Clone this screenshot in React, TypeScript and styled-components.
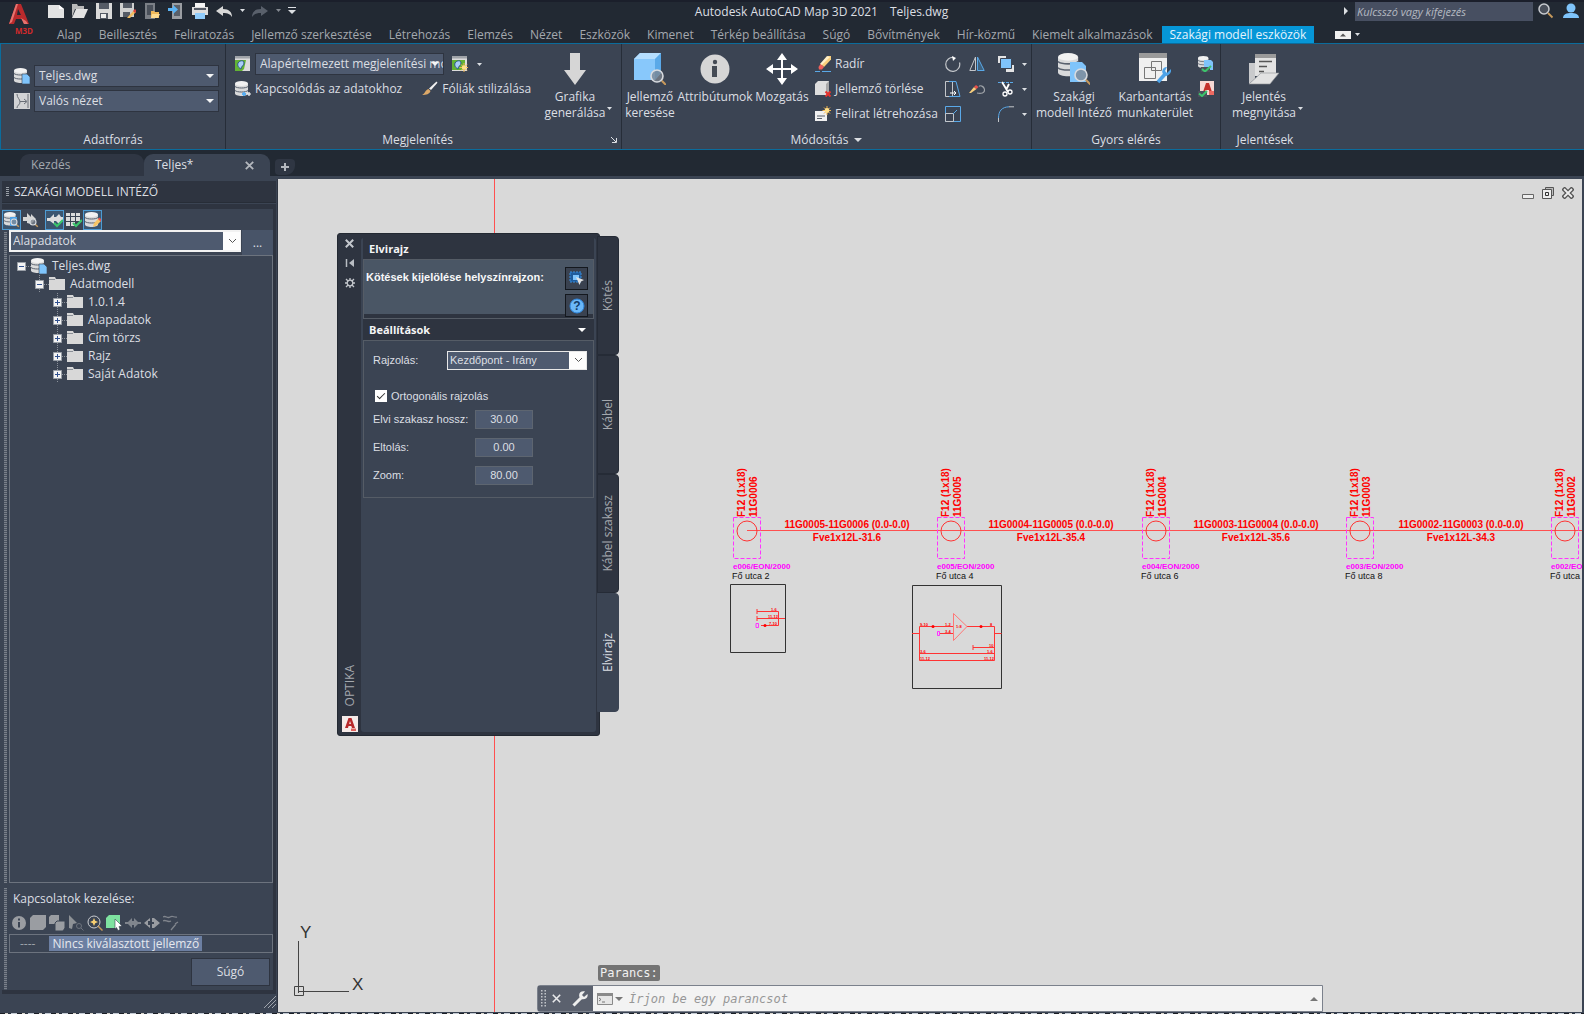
import React from "react";
import styled, { createGlobalStyle, css } from "styled-components";

const c = {
  frame: "#222933",
  ribbon: "#3b4453",
  dark: "#2e3440",
  field: "#4e5a6f",
  text: "#dcdfe3",
  dim: "#a4a8ae",
  accent: "#0696d7",
  edge: "#0b6c9c",
  canvas: "#d9d9d9",
  sky: "#7fc4fb",
};
const ui = `"Open Sans", "Noto Sans", sans-serif`;
const arial = `"Liberation Sans", Arial, sans-serif`;
const mono = `"DejaVu Sans Mono", monospace`;

const Global = createGlobalStyle`
  *, *::before, *::after { box-sizing: border-box; }
  html, body, #root { height: 100%; }
  body { margin: 0; overflow: hidden; background: ${c.frame}; color: ${c.text}; font: 12px/16px ${ui}; }
  button, input, select { font: inherit; color: inherit; margin: 0; padding: 0; border: 0; background: none; border-radius: 0; outline: 0; }
  svg { display: block; flex: none; }
  ul { list-style: none; margin: 0; padding: 0; }
  h2, h3 { margin: 0; font: inherit; }
`;

const Shell = styled.div`
  display: flex;
  flex-direction: column;
  height: 100vh;
`;

/* ---------- icons ---------- */
type IconProps = { size?: number; children: React.ReactNode; box?: number };
const Icon = ({ size = 16, box, children }: IconProps) => (
  <svg width={size} height={size} viewBox={`0 0 ${box ?? size} ${box ?? size}`} fill="none" aria-hidden="true">
    {children}
  </svg>
);
const Caret = ({ w = 5, color = "#dcdfe3" }: { w?: number; color?: string }) => (
  <svg width={w} height={Math.ceil(w / 2)} viewBox="0 0 10 5" preserveAspectRatio="none" aria-hidden="true">
    <path d="M0 0h10L5 5z" fill={color} />
  </svg>
);
const Cylinder = ({ s = 1 }: { s?: number }) => (
  <g transform={`scale(${s})`}>
    <path d="M0 2.5v10C0 14 3 15 6.500 15S13 14 13 12.500v-10z" fill="#d9dadb" />
    <ellipse cx="6.500" cy="2.500" rx="6.500" ry="2.500" fill="#f2f2f2" />
    <path d="M0 5.500c2 2 11 2 13 0M0 9.500c2 2 11 2 13 0" stroke="#5a626f" strokeWidth="1" />
  </g>
);
const DbIcon = () => (
  <Icon>
    <Cylinder />
    <path d="M8 6h5l3 3v7H8z" fill={c.sky} stroke="#3b4453" strokeWidth=".6" />
  </Icon>
);
const DbLinkIcon = () => (
  <Icon>
    <Cylinder />
    <path d="M9 11v4M7 13h4" stroke="#5aaef0" strokeWidth="2" />
    <path d="M12 13h4M14 11v4" stroke="#fff" strokeWidth="1.200" />
  </Icon>
);
const ViewIcon = () => (
  <Icon>
    <path d="M0 0h16v16H0z" fill="#d2d3d5" />
    <path d="M3 1c0 4 3 5 3 8s-3 3-3 6M14 1v14M6 8.500h6M10 6l3 2.500L10 11" stroke="#6a6f77" />
  </Icon>
);
const MapIcon = ({ star }: { star?: boolean }) => (
  <Icon>
    <path d="M0 0h15v15H0z" fill="#dcdcdc" />
    <path d="M0 0h15v2.500H0z" fill="#9fa3a8" />
    <path d={star ? "M0 4h13v10H0z" : "M0 4h11l-2 9-2 2H0z"} fill="#62b234" />
    <path d="M3 7c2-3 6-3 6 0s-3 3-3 6c-2-1-4-3-3-6z" fill="#a9cdf8" stroke="#2a5a8a" />
    {star && (
      <g>
        <path d="M12 7v9M7.500 11.500h9M9 8.500l6 6M15 8.500l-6 6" stroke="#f2b24c" />
        <circle cx="12" cy="11.500" r="2.200" fill="#ffe08a" />
      </g>
    )}
  </Icon>
);
const BrushIcon = () => (
  <Icon>
    <path d="M14.500 .5l1 1.200L9 9 7 7.500z" fill="#f1f1f1" />
    <path d="M6.500 8l2 2c-1 3-4 4-8.500 4 3-1 3-5 6.500-6z" fill="#dca868" />
  </Icon>
);
const DownArrow = () => (
  <Icon size={32}>
    <path d="M11 0h10v17h6L16 32 5 17h6z" fill="#d6d6d6" />
  </Icon>
);
const Lens = ({ x, y, r }: { x: number; y: number; r: number }) => (
  <g>
    <path d={`M${x + r * 0.8} ${y + r * 0.8}l${r * 0.8} ${r * 0.8}`} stroke="#c89a5c" strokeWidth={r > 4 ? 2 : 1.4} />
    <circle cx={x} cy={y} r={r} fill="#7d848e" fillOpacity=".75" stroke="#d8dbdf" strokeWidth={r > 4 ? 1.6 : 1.1} />
  </g>
);
const CubeFind = () => (
  <Icon size={32}>
    <path d="M0 6l6-6h21v20l-6 7H0z" fill="#88c8fb" />
    <path d="M0 6l6-6h21l-6 6z" fill="#b5defe" />
    <path d="M21 6l6-6v20l-6 7z" fill="#5aa9e8" />
    <Lens x={23} y={23} r={6} />
  </Icon>
);
const InfoBig = () => (
  <Icon size={32}>
    <circle cx="16" cy="16" r="14.500" fill="#d6d6d6" />
    <circle cx="16" cy="9" r="2.200" fill="#454b55" />
    <path d="M13 13h5v11h-5z" fill="#454b55" />
  </Icon>
);
const MoveIcon = () => (
  <Icon size={32}>
    <path d="M16 3v26M3 16h26" stroke="#fff" strokeWidth="2" />
    <path d="M16 0l5 7H11zM16 32l5-7H11zM0 16l7-5v10zM32 16l-7-5v10z" fill="#fff" />
  </Icon>
);
const EraserIcon = () => (
  <Icon>
    <path d="M13 0h3v3.500L9 11l-3.500-3z" fill="#f9cf7c" />
    <path d="M12 0L5 8l1.500 1.200L15 1z" fill="#fff0c8" />
    <path d="M5.500 8L9 11l-2 2.500H4L3.500 11z" fill="#f0605a" />
    <path d="M0 15.500h5M7 15.500h9" stroke="#5aa9e8" />
  </Icon>
);
const CubeDelete = () => (
  <Icon>
    <path d="M0 3l3-3h11v11l-3 3H0z" fill="#dedede" />
    <path d="M11 3l3-3v11l-3 3z" fill="#a9a9a9" />
    <path d="M10.500 10.500l5 5M15.500 10.500l-5 5" stroke="#e5322d" strokeWidth="2" />
  </Icon>
);
const LabelIcon = () => (
  <Icon>
    <path d="M0 5h12v10H0z" fill="#f0f0f0" />
    <path d="M2 10h8M2 12.500h5" stroke="#555c67" />
    <path d="M12 0v9M7.500 4.500h9M9 1.500l6 6M15 1.500l-6 6" stroke="#f2b24c" />
    <circle cx="12" cy="4.500" r="2.400" fill="#ffe08a" />
  </Icon>
);
const RotateIcon = () => (
  <Icon>
    <path d="M9 1.500a7 7 0 1 0 5.500 5" stroke="#c3c6ca" strokeWidth="1.200" />
    <path d="M7 0l4 2-3 3z" fill="#fff" />
  </Icon>
);
const MirrorIcon = () => (
  <Icon>
    <path d="M6.500 1v13.500H.8z" stroke="#c3c6ca" />
    <path d="M8.500 1v13.500h6.700z" stroke="#5aa9e8" fill="#3f627f" />
  </Icon>
);
const StretchIcon = () => (
  <Icon>
    <path d="M.5.500h7v15h-7z" stroke="#c3c6ca" />
    <path d="M4 .5h7l4 15H4" stroke="#5aa9e8" />
    <path d="M5 12h5M9 10l2 2-2 2" stroke="#fff" />
  </Icon>
);
const EditIcon = () => (
  <Icon>
    <path d="M0 12l5-6 2.500 2L2 12z" fill="#f9cf7c" />
    <path d="M5 6l2-2 2.500 2-2 2z" fill="#e8504a" />
    <path d="M8 12c4 1 8 0 7.500-3.500S11 4 10 5.500" stroke="#9fa3a8" strokeWidth="1.200" />
  </Icon>
);
const ScaleIcon = () => (
  <Icon>
    <path d="M.5.500h15v15H.5z" stroke="#5aa9e8" />
    <path d="M.5 7.500h8v8h-8z" stroke="#c3c6ca" />
    <path d="M8 8l4-4" stroke="#5aa9e8" />
  </Icon>
);
const OrderIcon = () => (
  <Icon>
    <path d="M0 0h8v7H0zM8 9h8v7H8z" fill="#e4e4e4" />
    <path d="M2.500 2.500h11v10h-11z" fill={c.sky} stroke="#3b4453" />
  </Icon>
);
const TrimIcon = () => (
  <Icon>
    <path d="M0 1.500h16" stroke="#5aa9e8" strokeDasharray="3 1" />
    <path d="M4 1l6 10M11 3L8 9" stroke="#fff" strokeWidth="1.800" />
    <circle cx="7" cy="13" r="2" stroke="#fff" strokeWidth="1.300" />
    <circle cx="12" cy="11" r="2" stroke="#fff" strokeWidth="1.300" />
  </Icon>
);
const FilletIcon = () => (
  <Icon>
    <path d="M.5 16v-4" stroke="#c3c6ca" />
    <path d="M.5 12C.5 5 4 1 11 .8" stroke="#5aa9e8" />
    <path d="M11 .8h5" stroke="#c3c6ca" />
  </Icon>
);
const ModelManager = () => (
  <Icon size={32}>
    <Cylinder s={1.55} />
    <path d="M12 9h12l4 4v16H12z" fill={c.sky} />
    <Lens x={23} y={22} r={6} />
  </Icon>
);
const Workspace = () => (
  <Icon size={32}>
    <path d="M0 0h28v28H0z" fill="#f0f0f0" />
    <path d="M0 0h28v5H0z" fill="#9a9a9a" />
    <path d="M5.500 14.500h11v11h-11zM12.500 8.500h10v9h-10z" fill="#f0f0f0" stroke="#777" />
    <path d="M19 29l8-9" stroke="#4ea3e8" strokeWidth="3.500" />
    <path d="M32 16l-4 4-2-2 2-4c-4 0-6 4-4 7l3 2c3 0 6-4 5-7z" fill="#4ea3e8" />
  </Icon>
);
const DbCheck = () => (
  <Icon>
    <Cylinder s={0.8} />
    <path d="M6 4h7l2 2v8H6z" fill={c.sky} />
    <path d="M3 11h9v5H3z" fill="#4a505a" />
    <path d="M4 13l3 2.500L13 10" stroke="#3cc46c" strokeWidth="2" />
  </Icon>
);
const CadCheck = () => (
  <Icon>
    <path d="M2 0h14v14H2z" fill="#f7d9d5" />
    <path d="M5 11L8 2h3l3 9h-2.500l-.6-2H7.600L7 11z" fill="#c4302b" />
    <path d="M11 10h5v4h-5z" fill="#ee6a62" />
    <path d="M0 10h9v6H0z" fill="#4a505a" />
    <path d="M1 12.500L4 15l5-5" stroke="#3cc46c" strokeWidth="2" />
  </Icon>
);
const ReportIcon = () => (
  <Icon size={32}>
    <path d="M1 10h6v16l-6 5z" fill="#c9cacc" />
    <path d="M7 1h21v22H7z" fill="#e2e2e2" />
    <path d="M7 1h21v4H7z" fill="#9a9a9a" />
    <path d="M11 8.500h13M11 13.500h8M11 18.500h5" stroke="#555" strokeWidth="1.500" />
    <path d="M1 31l12-11h18l-9 11z" fill="#e2e2e2" stroke="#8d9095" strokeWidth=".6" />
  </Icon>
);
const FolderIcon = () => (
  <Icon>
    <path d="M0 1h6l1 2h9v11H0z" fill="#d8d8d8" />
    <path d="M0 3.500h6" stroke="#8a8f97" />
  </Icon>
);

/* ---------- title bar ---------- */
const Header = styled.header`
  display: flex;
  height: 43px;
  background: ${c.frame};
  border-top: 2px solid #1b1f2b;
`;
const Logo = styled.div`
  width: 44px;
  padding: 1px 0 0 8px;
`;
const HeaderMain = styled.div`
  flex: 1;
  display: flex;
  flex-direction: column;
  min-width: 0;
`;
const TitleRow = styled.div`
  display: flex;
  height: 24px;
`;
const Tools = styled.div`
  display: flex;
  flex: 1;
`;
const ToolButton = styled.button<{ $w?: number }>`
  width: ${(p) => p.$w ?? 24}px;
  height: 17px;
  display: flex;
  align-items: center;
  justify-content: center;
`;
const AppTitle = styled.div`
  display: flex;
  gap: 12px;
  padding: 2px 0 0 16px;
  white-space: nowrap;
`;
const HeaderRight = styled.div`
  flex: 1;
  display: flex;
  justify-content: flex-end;
  align-items: flex-start;
  gap: 5px;
  padding-right: 1px;
`;
const Search = styled.input`
  width: 178px;
  height: 19px;
  padding: 0 2px;
  background: #474f61;
  font-style: italic;
  font-size: 11px;
  &::placeholder { color: #b6bac1; opacity: 1; }
`;
const Tabs = styled.nav`
  display: flex;
  height: 17px;
  gap: 1px;
  padding-left: 5px;
`;
const Tab = styled.button<{ $on?: boolean }>`
  padding: 0 8px;
  line-height: 17px;
  white-space: nowrap;
  color: ${(p) => (p.$on ? "#e4f3fc" : c.dim)};
  background: ${(p) => (p.$on ? c.accent : "none")};
`;
const RibbonToggle = styled.button`
  display: flex;
  align-items: center;
  gap: 4px;
  margin-left: 20px;
`;
const tabNames = [
  "Alap", "Beillesztés", "Feliratozás", "Jellemző szerkesztése", "Létrehozás", "Elemzés", "Nézet", "Eszközök",
  "Kimenet", "Térkép beállítása", "Súgó", "Bővítmények", "Hír-közmű", "Kiemelt alkalmazások", "Szakági modell eszközök",
];

const quick: [string, React.ReactNode][] = [
  ["Új", <Icon><path d="M0 2h11l5 4v9H0z" fill="#e3e3e3" /><path d="M11 2l5 4h-5z" fill="#fff" /></Icon>],
  ["Megnyitás", <Icon><path d="M0 1h5l1 2h6v3H3L0 14z" fill="#b9b9b9" /><path d="M4 6h12l-4 9H0z" fill="#e3e3e3" /></Icon>],
  ["Mentés", <Icon><path d="M0 0h16v16H0z" fill="#dadada" /><path d="M3 0h10v6H3zM4 10h8v6H4z" fill="#555b66" /><path d="M5 11h5v4H5z" fill="#eee" /></Icon>],
  ["Mentés másként", <Icon><path d="M0 0h14v14H0z" fill="#cfcfcf" /><path d="M3 0h9v5H3zM3 9h7v5H3z" fill="#555b66" /><path d="M7 15l7-8 2 2-6 6z" fill="#f3bd62" /><path d="M13 8l2-2 1.500 2L15 10z" fill="#d9443f" /></Icon>],
  ["Megnyitás mobilról", <Icon><path d="M1 0h10v16H1z" fill="#7b7f86" /><path d="M3 2h6v10H3z" fill="#4a505a" /><path d="M7 8h3l1 1h4v6H7z" fill="#f1b95a" /><path d="M8 11h8l-2 4H7z" fill="#ffdc92" /></Icon>],
  ["Mentés mobilra", <Icon><path d="M4 0h10v16H4z" fill="#9a9da2" /><path d="M6 2h6v11H6z" fill="#5a606a" /><path d="M0 5h5V2l5 4.500L5 11V8H0z" fill="#5bb4f5" /></Icon>],
  ["Nyomtatás", <Icon><path d="M3 0h10v4H3z" fill="#f5f5f5" /><path d="M0 4h16v8H0z" fill="#dcdcdc" /><path d="M2 5h12v2H2z" fill="#555b66" /><path d="M3 10h10v6H3z" fill="#8fcbfb" /></Icon>],
  ["Visszavonás", <Icon><path d="M0 8l7-5v3c6 0 9 3 9 8-2-3-4-4-9-4v3z" fill="#d8d8d8" /></Icon>],
];

const HeaderBar = () => (
  <Header>
    <Logo>
      <svg width="28" height="34" viewBox="0 0 28 34" aria-hidden="true">
        <path d="M8 1h5l8 20h-5l-2-5H8l-2 5H1zM10 6L9 12h4z" fill="#b92a2c" />
        <path d="M8 1h2L4 19l-3 2zM13 15l3 6h4l-2-3z" fill="#e6736f" />
        <text x="7" y="31" fontSize="8" fontWeight="700" fontFamily="Open Sans" fill="#cf2a2c">M3D</text>
      </svg>
    </Logo>
    <HeaderMain>
      <TitleRow>
        <Tools>
          {quick.map(([n, i]) => <ToolButton key={n} aria-label={n}>{i}</ToolButton>)}
          <ToolButton $w={12} aria-label="Visszavonások"><Caret /></ToolButton>
          <ToolButton aria-label="Újra"><Icon><path d="M16 8L9 3v3c-6 0-9 3-9 8 2-3 4-4 9-4v3z" fill="#59606b" /></Icon></ToolButton>
          <ToolButton $w={12} aria-label="Ismétlések"><Caret color="#858a92" /></ToolButton>
          <ToolButton $w={16} aria-label="Testreszabás"><Icon size={8}><path d="M0 .5h8" stroke="#dcdfe3" /><path d="M0 3h8L4 7z" fill="#dcdfe3" /></Icon></ToolButton>
        </Tools>
        <AppTitle><span>Autodesk AutoCAD Map 3D 2021</span><span>Teljes.dwg</span></AppTitle>
        <HeaderRight>
          <ToolButton $w={8} aria-label="Kinyitás"><Icon size={8}><path d="M2 0l4 4-4 4z" fill="#dcdfe3" /></Icon></ToolButton>
          <Search aria-label="Keresés" placeholder="Kulcsszó vagy kifejezés" />
          <ToolButton $w={16} aria-label="Keres"><Icon><circle cx="6" cy="6" r="5" stroke="#c9ccd1" strokeWidth="1.500" fill="#4a505b" /><path d="M10 10l4.500 4.500" stroke="#c89a5c" strokeWidth="1.800" /></Icon></ToolButton>
          <ToolButton aria-label="Fiók"><Icon><circle cx="8" cy="5" r="4.500" fill="#7fc4fb" /><path d="M0 15c0-4 4-5 8-5s8 1 8 5z" fill="#7fc4fb" /></Icon></ToolButton>
        </HeaderRight>
      </TitleRow>
      <Tabs>
        {tabNames.map((n, i) => <Tab key={n} $on={i === tabNames.length - 1}>{n}</Tab>)}
        <RibbonToggle aria-label="Szalag">
          <svg width="16" height="8" aria-hidden="true"><path d="M0 0h16v8H0z" fill="#f0f0f0" /><path d="M5 5.500h6L8 2.500z" fill="#555" /></svg>
          <Caret />
        </RibbonToggle>
      </Tabs>
    </HeaderMain>
  </Header>
);

/* ---------- ribbon ---------- */
const Ribbon = styled.section`
  display: flex;
  height: 107px;
  background: ${c.ribbon};
  border: 1px solid ${c.edge};
  border-right: 0;
`;
const Panel = styled.section<{ $w: number }>`
  width: ${(p) => p.$w}px;
  display: flex;
  flex-direction: column;
  border-right: 1px solid #262d38;
  &:last-child { border-right: 0; }
`;
const PanelBody = styled.div<{ $pad?: string }>`
  flex: 1;
  display: flex;
  padding: ${(p) => p.$pad ?? "9px 8px 0"};
`;
const PanelTitle = styled.h2<{ $launcher?: boolean }>`
  height: 18px;
  display: flex;
  align-items: center;
  justify-content: center;
  gap: 6px;
  position: relative;
  padding-right: ${(p) => (p.$launcher ? 12 : 0)}px;
`;
const Corner = styled.span`
  position: absolute;
  right: 4px;
  top: 6px;
`;
const Stack = styled.div<{ $gap?: number; $w?: number }>`
  display: flex;
  flex-direction: column;
  gap: ${(p) => p.$gap ?? 3}px;
  ${(p) => p.$w && css`width: ${p.$w}px;`}
`;
const Line = styled.div<{ $gap?: number }>`
  display: flex;
  align-items: center;
  height: 22px;
  gap: ${(p) => p.$gap ?? 4}px;
`;
const Drop = styled.div`
  flex: 1;
  min-width: 0;
  height: 22px;
  position: relative;
  display: flex;
  align-items: center;
  & > svg { position: absolute; right: 5px; }
`;
const DropSelect = styled.select`
  appearance: none;
  width: 100%;
  height: 22px;
  padding: 0 0 0 4px;
  background: ${c.field};
  border: 1px solid ${c.dark};
`;
const SmallBtn = styled.button`
  display: flex;
  align-items: center;
  gap: 4px;
  height: 22px;
  white-space: nowrap;
`;
const BigBtn = styled.button<{ $w: number }>`
  width: ${(p) => p.$w}px;
  height: 72px;
  display: flex;
  flex-direction: column;
  align-items: center;
  gap: 4px;
  white-space: nowrap;
  position: relative;
`;
const BigCaret = styled.span`
  position: absolute;
  right: 0;
  top: 54px;
`;
const Big = ({ w, icon, lines, caret }: { w: number; icon: React.ReactNode; lines: string[]; caret?: boolean }) => (
  <BigBtn $w={w}>
    {icon}
    <span>{lines.map((l, i) => <React.Fragment key={l}>{i > 0 && <br />}{l}</React.Fragment>)}</span>
    {caret && <BigCaret><Caret /></BigCaret>}
  </BigBtn>
);
const IconGrid = styled.div`
  display: grid;
  grid-template-columns: 24px 29px 24px 8px;
  grid-auto-rows: 22px;
  row-gap: 3px;
  align-items: center;
`;
const IconBtn = styled.button`
  display: flex;
`;
const StyleTools = styled.div`
  display: flex;
  align-items: center;
  gap: 9px;
  width: 90px;
  padding-left: 4px;
`;
const SmallColumn = styled(Stack)`
  width: 130px;
  margin-left: 6px;
`;
const DropField = ({ label, value }: { label: string; value: string }) => (
  <Drop>
    <DropSelect aria-label={label}><option>{value}</option></DropSelect>
    <Caret w={8} color="#f4f5f6" />
  </Drop>
);

const RibbonBar = () => (
  <Ribbon>
    <Panel $w={225}>
      <PanelBody $pad="21px 6px 0 13px">
        <Stack $w={205}>
          <Line><DbIcon /><DropField label="Adatforrás" value="Teljes.dwg" /></Line>
          <Line><ViewIcon /><DropField label="Nézet" value="Valós nézet" /></Line>
        </Stack>
      </PanelBody>
      <PanelTitle>Adatforrás</PanelTitle>
    </Panel>
    <Panel $w={396}>
      <PanelBody $pad="9px 8px 0 9px">
        <Stack $w={303}>
          <Line>
            <MapIcon />
            <DropField label="Megjelenítési modell" value="Alapértelmezett megjelenítési modell" />
            <StyleTools><IconBtn aria-label="Új stílus"><MapIcon star /></IconBtn><Caret /></StyleTools>
          </Line>
          <Line $gap={20}>
            <SmallBtn><DbLinkIcon />Kapcsolódás az adatokhoz</SmallBtn>
            <SmallBtn><BrushIcon />Fóliák stilizálása</SmallBtn>
          </Line>
        </Stack>
        <Big w={74} icon={<DownArrow />} lines={["Grafika", "generálása"]} caret />
      </PanelBody>
      <PanelTitle $launcher>Megjelenítés<Corner><Icon size={6}><path d="M0 0l5 5M5.500 1v4.500H1" stroke="#dcdfe3" /></Icon></Corner></PanelTitle>
    </Panel>
    <Panel $w={410}>
      <PanelBody $pad="9px 0 0 3px">
        <Big w={50} icon={<CubeFind />} lines={["Jellemző", "keresése"]} />
        <Big w={80} icon={<InfoBig />} lines={["Attribútumok"]} />
        <Big w={54} icon={<MoveIcon />} lines={["Mozgatás"]} />
        <SmallColumn>
          <SmallBtn><EraserIcon />Radír</SmallBtn>
          <SmallBtn><CubeDelete />Jellemző törlése</SmallBtn>
          <SmallBtn><LabelIcon />Felirat létrehozása</SmallBtn>
        </SmallColumn>
        <IconGrid>
          <IconBtn aria-label="Forgatás"><RotateIcon /></IconBtn>
          <IconBtn aria-label="Tükrözés"><MirrorIcon /></IconBtn>
          <IconBtn aria-label="Sorrend"><OrderIcon /></IconBtn><Caret />
          <IconBtn aria-label="Nyújtás"><StretchIcon /></IconBtn>
          <IconBtn aria-label="Szerkesztés"><EditIcon /></IconBtn>
          <IconBtn aria-label="Metszés"><TrimIcon /></IconBtn><Caret />
          <IconBtn aria-label="Lépték"><ScaleIcon /></IconBtn>
          <span />
          <IconBtn aria-label="Lekerekítés"><FilletIcon /></IconBtn><Caret />
        </IconGrid>
      </PanelBody>
      <PanelTitle>Módosítás<Caret w={8} /></PanelTitle>
    </Panel>
    <Panel $w={189}>
      <PanelBody $pad="9px 0 0 4px">
        <Big w={76} icon={<ModelManager />} lines={["Szakági", "modell Intéző"]} />
        <Big w={86} icon={<Workspace />} lines={["Karbantartás", "munkaterület"]} />
        <Stack>
          <SmallBtn aria-label="Adatbázis ellenőrzése"><DbCheck /></SmallBtn>
          <SmallBtn aria-label="Rajz ellenőrzése"><CadCheck /></SmallBtn>
        </Stack>
      </PanelBody>
      <PanelTitle>Gyors elérés</PanelTitle>
    </Panel>
    <Panel $w={88}>
      <PanelBody $pad="9px 4px 0">
        <Big w={78} icon={<ReportIcon />} lines={["Jelentés", "megnyitása"]} caret />
      </PanelBody>
      <PanelTitle>Jelentések</PanelTitle>
    </Panel>
  </Ribbon>
);

/* ---------- document tabs ---------- */
const DocBar = styled.nav`
  display: flex;
  align-items: flex-end;
  height: 26px;
  padding-left: 20px;
  background: ${c.frame};
`;
const DocTab = styled.button<{ $w: number; $on?: boolean }>`
  width: ${(p) => p.$w}px;
  height: 22px;
  padding: 0 16px 0 11px;
  display: flex;
  align-items: center;
  justify-content: space-between;
  border-radius: 9px 9px 0 0;
  color: ${(p) => (p.$on ? c.text : c.dim)};
  background: ${(p) => (p.$on ? c.ribbon : "#2f3643")};
`;
const NewTab = styled.button`
  width: 20px;
  height: 16px;
  margin: 0 0 1px 5px;
  display: flex;
  align-items: center;
  justify-content: center;
  border-radius: 4px 4px 9px 4px;
  background: #2f3643;
`;
const XMark = ({ s = 9, w = 1.8, color = "#b4b8be" }: { s?: number; w?: number; color?: string }) => (
  <svg width={s} height={s} viewBox="0 0 9 9" aria-hidden="true"><path d="M.8.800l7.400 7.400M8.200.800L.8 8.200" stroke={color} strokeWidth={w} /></svg>
);

/* ---------- explorer ---------- */
const Work = styled.main`
  flex: 1;
  min-height: 0;
  display: flex;
  background: ${c.ribbon};
  padding: 3px 2px 0 0;
`;
const Explorer = styled.aside`
  width: 278px;
  display: flex;
  flex-direction: column;
  padding: 2px 1px 0 2px;
  border-right: 1px solid ${c.dark};
`;
const ExplorerTitle = styled.h2`
  height: 22px;
  display: flex;
  align-items: center;
  gap: 5px;
  padding-left: 4px;
  background: ${c.dark};
  border-bottom: 1px solid #272d37;
`;
const ExplorerFrame = styled.div`
  flex: 1;
  min-height: 0;
  margin-top: 1px;
  display: flex;
  flex-direction: column;
  border-style: solid;
  border-color: ${c.dark};
  border-width: 5px 3px 4px 0;
`;
const IconBar = styled.div`
  height: 21px;
  display: flex;
  align-items: center;
`;
const IconToggle = styled.button<{ $on?: boolean; $ml?: number }>`
  width: 19px;
  height: 20px;
  margin-left: ${(p) => p.$ml ?? 0}px;
  display: flex;
  align-items: center;
  justify-content: center;
  border: 1px solid ${(p) => (p.$on ? "#4d9bd3" : "transparent")};
  background: ${(p) => (p.$on ? "#3c5670" : "none")};
`;
const Gripped = styled.div<{ $grow?: boolean }>`
  display: flex;
  ${(p) => p.$grow && css`flex: 1; min-height: 0;`}
`;
const LowerGripped = styled(Gripped)`
  padding-top: 3px;
`;
const Grip = styled.div`
  width: 3px;
  margin: 2px 2px 0;
  background: repeating-linear-gradient(#7a808a 0 1px, #4b5462 1px 2px);
`;
const GripBody = styled.div`
  flex: 1;
  min-width: 0;
  display: flex;
  flex-direction: column;
`;
const ComboRow = styled.div`
  display: flex;
  height: 25px;
  gap: 1px;
`;
const Combo = styled.div`
  flex: 1;
  position: relative;
  display: flex;
  align-items: center;
  height: 22px;
  & > svg { position: absolute; right: 4px; }
`;
const ComboSelect = styled.select<{ $h?: number }>`
  appearance: none;
  width: 100%;
  height: ${(p) => p.$h ?? 22}px;
  padding: 0 20px 0 2px;
  border: 2px solid #f2f2f2;
  border-right-width: 1px;
  background: linear-gradient(to left, #fdfdfd 17px, ${c.field} 17px);
`;
const MoreBtn = styled.button`
  width: 31px;
  background: #485468;
`;
const Tree = styled.ul`
  flex: 1;
  min-height: 0;
  border: 1px solid #6c737e;
  padding: 1px 0 0 7px;
  overflow: hidden;
`;
const TreeRow = styled.li<{ $level: number }>`
  display: flex;
  align-items: center;
  height: 18px;
  padding-left: ${(p) => p.$level * 18}px;
`;
const TreeLabel = styled.span`
  padding-left: 5px;
`;
const Expander = ({ open, root }: { open?: boolean; root?: boolean }) => (
  <svg width="14" height="18" viewBox="0 0 14 18" aria-hidden="true">
    {!root && <path d="M4.500 0v18" stroke="#8b919a" strokeDasharray="1 1" />}
    <path d="M9 9.500h5" stroke="#8b919a" strokeDasharray="1 1" />
    <path d="M.5 5.500h8v8h-8z" fill="#f4f4f4" stroke="#9aa0a8" />
    <path d={open ? "M2 9.500h5" : "M2 9.500h5M4.500 7v5"} stroke="#31518f" />
  </svg>
);
const tree: [number, string][] = [
  [0, "Teljes.dwg"], [1, "Adatmodell"], [2, "1.0.1.4"], [2, "Alapadatok"], [2, "Cím törzs"], [2, "Rajz"], [2, "Saját Adatok"],
];
const Links = styled.div`
  padding-left: 4px;
  height: 26px;
  line-height: 26px;
`;
const LinkIcons = styled.div`
  display: flex;
  align-items: center;
  gap: 3px;
  height: 22px;
  padding-left: 2px;
`;
const PickList = styled.div`
  height: 19px;
  display: flex;
  align-items: center;
  border: 1px solid #6c737e;
  padding-left: 10px;
  color: #9da2aa;
`;
const Picked = styled.mark`
  margin-left: 14px;
  padding: 0 3px;
  height: 15px;
  line-height: 15px;
  color: #e6e9ee;
  background: #6c7fa2;
`;
const HelpBtn = styled.button`
  align-self: flex-end;
  width: 79px;
  height: 28px;
  margin: 5px 3px 4px 0;
  background: ${c.field};
  border: 1px solid ${c.dark};
`;
const ExplorerFoot = styled.div`
  height: 18px;
  display: flex;
  justify-content: flex-end;
  padding-top: 2px;
`;
const Check = () => <path d="M7 11l3 3 6-6" stroke="#3cc46c" strokeWidth="2.200" />;
const Plug = ({ color }: { color: string }) => (
  <path d="M0 6h3L7 2v3h2l3-3 2 3h2v4h-2l-2 3-3-3H7v3L3 9H0z" fill={color} />
);

const ExplorerPane = () => (
  <Explorer>
    <ExplorerTitle>
      <svg width="3" height="9" aria-hidden="true"><path d="M1.500 0v9" stroke="#9aa0a8" strokeWidth="3" strokeDasharray="1 1" /></svg>
      SZAKÁGI MODELL INTÉZŐ
    </ExplorerTitle>
    <ExplorerFrame>
      <IconBar>
        <IconToggle $on aria-label="Böngésző"><Icon><Cylinder s={0.9} /><path d="M6 5h7v9H6z" fill="#4ea3e8" /><Lens x={10} y={10} r={3} /></Icon></IconToggle>
        <IconToggle aria-label="Keresés"><Icon><path d="M0 5h4V1l4 4V2l5 5-5 5-4-1V9H0z" fill="#d6d6d6" /><Lens x={10} y={10} r={3} /></Icon></IconToggle>
        <IconToggle $on $ml={5} aria-label="Kapcsolat"><Icon><Plug color="#dedede" /><Check /></Icon></IconToggle>
        <IconToggle aria-label="Táblák"><Icon><path d="M0 1h4v3H0zM5 1h4v3H5zM10 1h4v3h-4zM0 5h4v4H0zM5 5h4v4H5zM10 5h4v4h-4zM0 10h4v4H0zM5 10h4v4H5z" fill="#dcdcdc" /><Check /></Icon></IconToggle>
        <IconToggle $on aria-label="Szerkesztés"><Icon><Cylinder /><path d="M8 15l1-4 5-5 2.500 2.500-5 5z" fill="#f6c565" /><path d="M13 7l1.500-1.500L17 8l-1.500 1.500z" fill="#e8504a" /></Icon></IconToggle>
      </IconBar>
      <Gripped $grow>
        <Grip />
        <GripBody>
          <ComboRow>
            <Combo>
              <ComboSelect aria-label="Réteg"><option>Alapadatok</option></ComboSelect>
              <svg width="9" height="6" aria-hidden="true"><path d="M1 1l3.500 3.500L8 1" stroke="#555" fill="none" /></svg>
            </Combo>
            <MoreBtn>...</MoreBtn>
          </ComboRow>
          <Tree>
            {tree.map(([lv, n], i) => (
              <TreeRow key={n} $level={lv}>
                <Expander open={lv < 2} root={i === 0} />
                {i === 0 ? <DbIcon /> : <FolderIcon />}
                <TreeLabel>{n}</TreeLabel>
              </TreeRow>
            ))}
          </Tree>
        </GripBody>
      </Gripped>
      <LowerGripped>
        <Grip />
        <GripBody>
          <Links>Kapcsolatok kezelése:</Links>
          <LinkIcons>
            <Icon><circle cx="8" cy="8" r="7" fill="#9a9da2" /><path d="M8 3.500v2M8 7v5.500" stroke="#3b4453" strokeWidth="2" /></Icon>
            <Icon><path d="M0 3l3-3h13v12l-3 3H0z" fill="#9a9da2" /></Icon>
            <Icon><path d="M0 2l2-2h8v6l-2 3H0z" fill="#9a9da2" /><path d="M6 8l2-2h8v7l-2 3H6z" fill="#9a9da2" stroke="#3b4453" /></Icon>
            <Icon><path d="M1 0l8 8-4 1-1 5-3-1z" fill="#8d9196" /><circle cx="11" cy="11" r="2.500" stroke="#6d737d" /><path d="M13 13l2.500 2.500" stroke="#6d737d" /></Icon>
            <Icon><circle cx="7" cy="7" r="6" stroke="#c9ccd1" /><path d="M11 11l4.500 4.500" stroke="#c89a5c" strokeWidth="1.500" /><path d="M7 3l1.200 2.800L11 7 8.200 8.200 7 11 5.800 8.200 3 7l2.800-1.200z" fill="#f7cf72" /></Icon>
            <Icon><path d="M0 3l3-3h11v11l-2 2H0z" fill="#7ee2a0" /><path d="M9 4l7 7-3 .5 1 3-2 1-1.500-3L9 14z" fill="#fff" stroke="#3b4453" strokeWidth=".6" /></Icon>
            <Icon><path d="M0 7h3l4-4v3h2V3l4 4h3v2h-3l-4 4v-3H7v3L3 9H0z" fill="#80858d" /></Icon>
            <Icon><path d="M0 8l6-5v3H4v4h2v3zM8 3h2l6 5-6 5H8V9h2V7H8z" fill="#9a9da2" /></Icon>
            <Icon><path d="M0 2c3-2 4 2 7 0s4 1 7 0M0 6c3-2 4 2 8 0M8 15l5-6M12 9l3-2" stroke="#80858d" strokeWidth="1.300" /></Icon>
          </LinkIcons>
          <PickList>----<Picked>Nincs kiválasztott jellemző</Picked></PickList>
          <HelpBtn>Súgó</HelpBtn>
        </GripBody>
      </LowerGripped>
    </ExplorerFrame>
    <ExplorerFoot>
      <Icon size={12}><path d="M0 12L12 0M4 12l8-8M8 12l4-4" stroke="#a0a5ad" /></Icon>
    </ExplorerFoot>
  </Explorer>
);

/* ---------- drawing ---------- */
const Canvas = styled.section`
  flex: 1;
  min-width: 0;
  position: relative;
  overflow: hidden;
  background: ${c.canvas};
`;
const Sheet = styled.svg`
  position: absolute;
  inset: 0;
  width: 100%;
  height: 100%;
`;
const Ucs = styled.svg`
  position: absolute;
  left: 14px;
  bottom: 14px;
`;
const nodes = [
  { x: 747, id: "11G0006", e: "e006/EON/2000", a: "Fő utca 2" },
  { x: 951, id: "11G0005", e: "e005/EON/2000", a: "Fő utca 4" },
  { x: 1156, id: "11G0004", e: "e004/EON/2000", a: "Fő utca 6" },
  { x: 1360, id: "11G0003", e: "e003/EON/2000", a: "Fő utca 8" },
  { x: 1565, id: "11G0002", e: "e002/EON/2000", a: "Fő utca 10" },
];
const spans = [
  { x: 847, t: "11G0005-11G0006 (0.0-0.0)", b: "Fve1x12L-31.6" },
  { x: 1051, t: "11G0004-11G0005 (0.0-0.0)", b: "Fve1x12L-35.4" },
  { x: 1256, t: "11G0003-11G0004 (0.0-0.0)", b: "Fve1x12L-35.6" },
  { x: 1461, t: "11G0002-11G0003 (0.0-0.0)", b: "Fve1x12L-34.3" },
];
const RedText = styled.text`
  font: 700 10px ${arial};
  fill: #f00;
`;
const TinyText = styled.text`
  font: 700 4px ${arial};
  fill: #f00;
`;
const Plan = () => (
  <Sheet aria-label="Elvi rajz">
    <g transform="translate(-278 -179)" fill="none">
      <path d="M494.500 0v2000" stroke="#ff5050" />
      <path d="M747 530.500h2000" stroke="#ff5050" />
      {spans.map((s) => (
        <g key={s.x}>
          <RedText x={s.x} y={528} textAnchor="middle">{s.t}</RedText>
          <RedText x={s.x} y={541} textAnchor="middle">{s.b}</RedText>
        </g>
      ))}
      {nodes.map((n) => (
        <g key={n.id}>
          <circle cx={n.x} cy="531" r="10" stroke="#f33" />
          <path d={`M${n.x - 13.5} 517.500h27v41h-27z`} stroke="#f3f" strokeDasharray="4 2" />
          <RedText transform={`translate(${n.x - 2} 517) rotate(-90)`}>F12 (1x18)</RedText>
          <RedText transform={`translate(${n.x + 10} 517) rotate(-90)`}>{n.id}</RedText>
          <text x={n.x - 14} y="569" fill="#f0f" fontFamily="Liberation Sans" fontWeight="700" fontSize="8">{n.e}</text>
          <text x={n.x - 15} y="579" fill="#111" fontFamily="Liberation Sans" fontSize="9">{n.a}</text>
        </g>
      ))}
      <path d="M730.500 584.500h55v68h-55zM912.500 585.500h89v103h-89z" stroke="#333" />
      <path d="M757 611.500h21.500v14H761M757 618.500h28M757 609v5M757 616v5" stroke="#f33" />
      <path d="M756 623.500h2.500v4H756z" stroke="#f3f" />
      <circle cx="765" cy="625.500" r="1.500" fill="#f00" />
      <TinyText x="771" y="611">1-6</TinyText>
      <TinyText x="768" y="618">11-12</TinyText>
      <TinyText x="769" y="625">7-10</TinyText>
      <path d="M912 633.500h7.500M994.500 633.500h7M953 626.500h-33.500v34h75v-34H967M940 633.500h13M973 647.500h21.500M973 645v5M919.500 653.500h75" stroke="#f33" />
      <path d="M953.500 613.500l13.500 13-13.500 14z" stroke="#f77" />
      <path d="M937.500 631.500h2v4h-2z" stroke="#f3f" />
      <circle cx="933" cy="626.500" r="1.500" fill="#f00" />
      <circle cx="981" cy="626.500" r="1.500" fill="#f00" />
      <TinyText x="920" y="626">9-10</TinyText>
      <TinyText x="945" y="626">1-2</TinyText>
      <TinyText x="945" y="633">3-4</TinyText>
      <TinyText x="956" y="628">1:8</TinyText>
      <TinyText x="990" y="626">8</TinyText>
      <TinyText x="989" y="647">10</TinyText>
      <TinyText x="920" y="653">3-6</TinyText>
      <TinyText x="987" y="653">1-6</TinyText>
      <TinyText x="920" y="660">11-12</TinyText>
      <TinyText x="984" y="660">11-12</TinyText>
    </g>
  </Sheet>
);
const WindowBtns = styled.div`
  position: absolute;
  top: 8px;
  right: 8px;
  display: flex;
  gap: 8px;
`;
const Prompt = styled.output`
  position: absolute;
  left: 320px;
  bottom: 31px;
  height: 16px;
  padding: 0 2px;
  border-radius: 2px;
  background: #747474;
  color: #f1f1f1;
  font: 12px/16px ${mono};
`;
const CommandBar = styled.div`
  position: absolute;
  left: 259px;
  right: 259px;
  bottom: 0;
  height: 27px;
  display: flex;
  align-items: center;
  background: #f3f3f3;
  border: 1px solid #7b818c;
  border-radius: 3px 0 0 3px;
`;
const CommandTools = styled.div`
  width: 55px;
  height: 25px;
  display: flex;
  align-items: center;
  gap: 6px;
  padding: 0 5px 0 3px;
  background: #5b616e;
  & > :last-child { margin-left: auto; }
`;
const CommandIcon = styled.div`
  display: flex;
  align-items: center;
  gap: 2px;
  padding: 0 6px 0 4px;
`;
const CommandInput = styled.input`
  flex: 1;
  min-width: 0;
  height: 25px;
  color: #333;
  font: italic 12px ${mono};
  &::placeholder { color: #979797; opacity: 1; }
`;
const CommandMore = styled.button`
  padding: 0 4px;
`;

/* ---------- palette ---------- */
const Palette = styled.section`
  position: absolute;
  left: 59px;
  top: 54px;
  display: flex;
  align-items: flex-start;
`;
const PaletteBox = styled.div`
  width: 263px;
  height: 503px;
  display: flex;
  padding: 4px 3px 3px 0;
  background: ${c.dark};
  border: 1px solid #232932;
  border-radius: 3px;
`;
const PaletteRail = styled.div`
  width: 23px;
  display: flex;
  flex-direction: column;
  align-items: center;
  gap: 10px;
`;
const RailBtn = styled.button`
  width: 10px;
  height: 10px;
`;
const vertical = css`
  writing-mode: vertical-rl;
  transform: rotate(180deg);
`;
const RailTitle = styled.h2`
  ${vertical}
  margin-top: auto;
  color: ${c.dim};
`;
const PaletteBody = styled.div`
  flex: 1;
  padding: 0 2px;
  background: ${c.ribbon};
  border-radius: 3px;
  font: 11px/14px ${arial};
`;
const SectionBar = styled.h3`
  height: 21px;
  display: flex;
  align-items: center;
  justify-content: space-between;
  padding: 0 8px 0 6px;
  background: ${c.dark};
  color: #f4f5f6;
  font: 700 11px/20px ${ui};
`;
const SelectSection = styled.div`
  height: 60px;
  display: flex;
  justify-content: space-between;
  padding: 7px 5px 0 2px;
  background: linear-gradient(#4a5665 54px, ${c.dark} 54px);
  border: 1px solid #555c66;
  font: 700 11px/20px ${arial};
  color: #f7f8f9;
`;
const SquareBtn = styled.button`
  width: 23px;
  height: 23px;
  display: flex;
  align-items: center;
  justify-content: center;
  background: #3a4250;
  border: 1px solid #14181e;
`;
const Settings = styled.form`
  border: 1px solid #555c66;
  padding: 9px 6px 8px 9px;
  display: flex;
  flex-direction: column;
`;
const Field = styled.label`
  display: flex;
  align-items: center;
  height: 28px;
  & > span { width: 102px; white-space: nowrap; }
`;
const DrawField = styled(Field)`
  height: 20px;
  margin-bottom: 18px;
  & > span { width: 74px; }
`;
const DrawSelect = styled(ComboSelect)`
  border: 1px solid #e8e8e8;
`;
const CheckField = styled.label`
  display: flex;
  align-items: center;
  gap: 4px;
  height: 16px;
  margin: 0 0 1px 2px;
`;
const Tick = styled.input`
  appearance: none;
  width: 12px;
  height: 12px;
  background: #fff;
  display: grid;
  place-items: center;
  &:checked::after {
    content: "";
    width: 8px;
    height: 4px;
    margin-bottom: 3px;
    border: solid #333;
    border-width: 0 0 1px 1px;
    transform: rotate(-45deg);
  }
`;
const NumberBox = styled.input`
  width: 58px;
  height: 19px;
  text-align: center;
  background: ${c.field};
  border: 1px solid #5d6570;
`;
const SideTabs = styled.div`
  margin: 3px 0 0 -3px;
  display: flex;
  flex-direction: column;
`;
const SideTab = styled.button<{ $on?: boolean }>`
  width: 22px;
  height: 119px;
  display: flex;
  align-items: center;
  justify-content: center;
  border: 1px solid ${(p) => (p.$on ? c.ribbon : "#252b36")};
  border-radius: 0 4px 4px 0;
  background: ${(p) => (p.$on ? c.ribbon : c.dark)};
  color: ${(p) => (p.$on ? c.text : c.dim)};
  & > span { ${vertical} }
`;

const PaletteWindow = () => (
  <Palette>
    <PaletteBox>
      <PaletteRail>
        <RailBtn aria-label="Bezárás"><XMark s={9} w={2} color="#c4c8cd" /></RailBtn>
        <RailBtn aria-label="Elrejtés"><Icon size={10}><path d="M1.500 1v8" stroke="#b9bdc3" strokeWidth="1.500" /><path d="M9 1v8L4 5z" fill="#b9bdc3" /></Icon></RailBtn>
        <RailBtn aria-label="Beállítások"><Icon size={10}><path d="M5 0v10M0 5h10M1 1l8 8M9 1L1 9" stroke="#c4c8cd" strokeWidth="1.300" /><circle cx="5" cy="5" r="2.800" fill="#2e3440" stroke="#c4c8cd" strokeWidth="1.300" /></Icon></RailBtn>
        <RailTitle>OPTIKA</RailTitle>
        <Icon size={16}><path d="M0 0h16v16H0z" fill="#f6ebe9" /><path d="M3 12L6.500 2h3L13 12h-3l-.7-2H6.500L6 12zM7.200 8H9L8 5z" fill="#b8292b" /><path d="M9 12.500h5v2.500H9z" fill="#e0615c" /></Icon>
      </PaletteRail>
      <PaletteBody>
        <SectionBar>Elvirajz</SectionBar>
        <SelectSection>
          <span>Kötések kijelölése helyszínrajzon:</span>
          <Stack $gap={4}>
            <SquareBtn aria-label="Kijelölés"><Icon><path d="M1 1h11v10H1z" fill="#1f5c9c" stroke="#3b8ede" strokeDasharray="2 1" /><path d="M4 4h6v5H4z" fill="#7fc4fb" /><path d="M7 6l8 3-3 1.500L10.500 14z" fill="#e2e2e2" /></Icon></SquareBtn>
            <SquareBtn aria-label="Súgó"><Icon><circle cx="8" cy="8" r="7" fill="#6bb8f8" stroke="#2f86dc" /><text x="8" y="12" textAnchor="middle" fontSize="12" fontFamily="Liberation Sans" fill="#123c68">?</text></Icon></SquareBtn>
          </Stack>
        </SelectSection>
        <SectionBar>Beállítások<Caret w={8} color="#fff" /></SectionBar>
        <Settings>
          <DrawField>
            <span>Rajzolás:</span>
            <Combo>
              <DrawSelect $h={19} defaultValue="a"><option value="a">Kezdőpont - Irány</option></DrawSelect>
              <svg width="9" height="6" aria-hidden="true"><path d="M1 1l3.500 3.500L8 1" stroke="#555" fill="none" /></svg>
            </Combo>
          </DrawField>
          <CheckField><Tick type="checkbox" defaultChecked />Ortogonális rajzolás</CheckField>
          <Field><span>Elvi szakasz hossz:</span><NumberBox defaultValue="30.00" /></Field>
          <Field><span>Eltolás:</span><NumberBox defaultValue="0.00" /></Field>
          <Field><span>Zoom:</span><NumberBox defaultValue="80.00" /></Field>
        </Settings>
      </PaletteBody>
    </PaletteBox>
    <SideTabs>
      {["Kötés", "Kábel", "Kábel szakasz", "Elvirajz"].map((t) => <SideTab key={t} $on={t === "Elvirajz"}><span>{t}</span></SideTab>)}
    </SideTabs>
  </Palette>
);

const BottomEdge = styled.div`
  height: 2px;
  background:
    linear-gradient(${c.ribbon} 1px, transparent 1px),
    repeating-linear-gradient(90deg, #1b1f26 0 5px, #d8d4cc 5px 8px, #2a3340 8px 11px, #c4cbd4 11px 17px);
`;

export default function App() {
  return (
    <Shell>
      <Global />
      <HeaderBar />
      <RibbonBar />
      <DocBar>
        <DocTab $w={124}>Kezdés</DocTab>
        <DocTab $w={126} $on>Teljes*<XMark /></DocTab>
        <NewTab aria-label="Új lap"><Icon size={8}><path d="M4 0v8M0 4h8" stroke="#b4b8be" strokeWidth="2" /></Icon></NewTab>
      </DocBar>
      <Work>
        <ExplorerPane />
        <Canvas>
          <Plan />
          <Ucs width="76" height="74" viewBox="0 0 76 74" fill="none" aria-hidden="true">
            <path d="M6.500 17v52M6.500 67.500H57M2.500 62.500h9v9h-9z" stroke="#444" />
            <text x="8" y="14" fontSize="17" fontFamily="Liberation Sans" fill="#333">Y</text>
            <text x="60" y="66" fontSize="17" fontFamily="Liberation Sans" fill="#333">X</text>
          </Ucs>
          <WindowBtns>
            <button aria-label="Kis méret"><Icon size={12}><path d="M.5 7.500h11v4H.5z" fill="#eee" stroke="#666" /></Icon></button>
            <button aria-label="Teljes méret"><Icon size={12}><path d="M3.500.500h8v8h-8z" fill="#bbb" stroke="#555" /><path d="M.5 2.500h9v9h-9z" fill="#eee" stroke="#555" /><path d="M3.500 5.500h3v3h-3z" stroke="#333" /></Icon></button>
            <button aria-label="Bezárás"><Icon size={12}><path d="M1 1l10 10M11 1L1 11" stroke="#555" strokeWidth="4.500" /><path d="M2 2l8 8M10 2l-8 8" stroke="#eee" strokeWidth="1.800" /></Icon></button>
          </WindowBtns>
          <PaletteWindow />
          <Prompt>Parancs:</Prompt>
          <CommandBar>
            <CommandTools>
              <svg width="5" height="17" aria-hidden="true"><path d="M.8 0v17M4.200 0v17" stroke="#d4d6da" strokeWidth="1.300" strokeDasharray="1.500 1.500" /></svg>
              <button aria-label="Bezárás"><XMark s={9} w={1.6} color="#e8e9eb" /></button>
              <button aria-label="Testreszabás"><Icon><path d="M1.500 14.500L9 7" stroke="#eee" strokeWidth="3" /><path d="M15.500 3L12 6l-2-2 3-3.500c-4-1-7 2-5.500 5.500L9 8c4 1 7.500-1 6.500-5z" fill="#eee" /></Icon></button>
            </CommandTools>
            <CommandIcon>
              <Icon><path d="M.5 2.500h15v11H.5z" fill="#e6e6e6" stroke="#8a8a8a" /><path d="M0 2h16v3H0z" fill="#8a8a8a" /><path d="M2 7l2 1.500L2 10M5 11h3" stroke="#777" /></Icon>
              <Caret w={8} color="#777" />
            </CommandIcon>
            <CommandInput aria-label="Parancs" placeholder="Írjon be egy parancsot" />
            <CommandMore aria-label="Előzmények"><svg width="8" height="4" aria-hidden="true"><path d="M0 4h8L4 0z" fill="#777" /></svg></CommandMore>
          </CommandBar>
        </Canvas>
      </Work>
      <BottomEdge />
    </Shell>
  );
}
